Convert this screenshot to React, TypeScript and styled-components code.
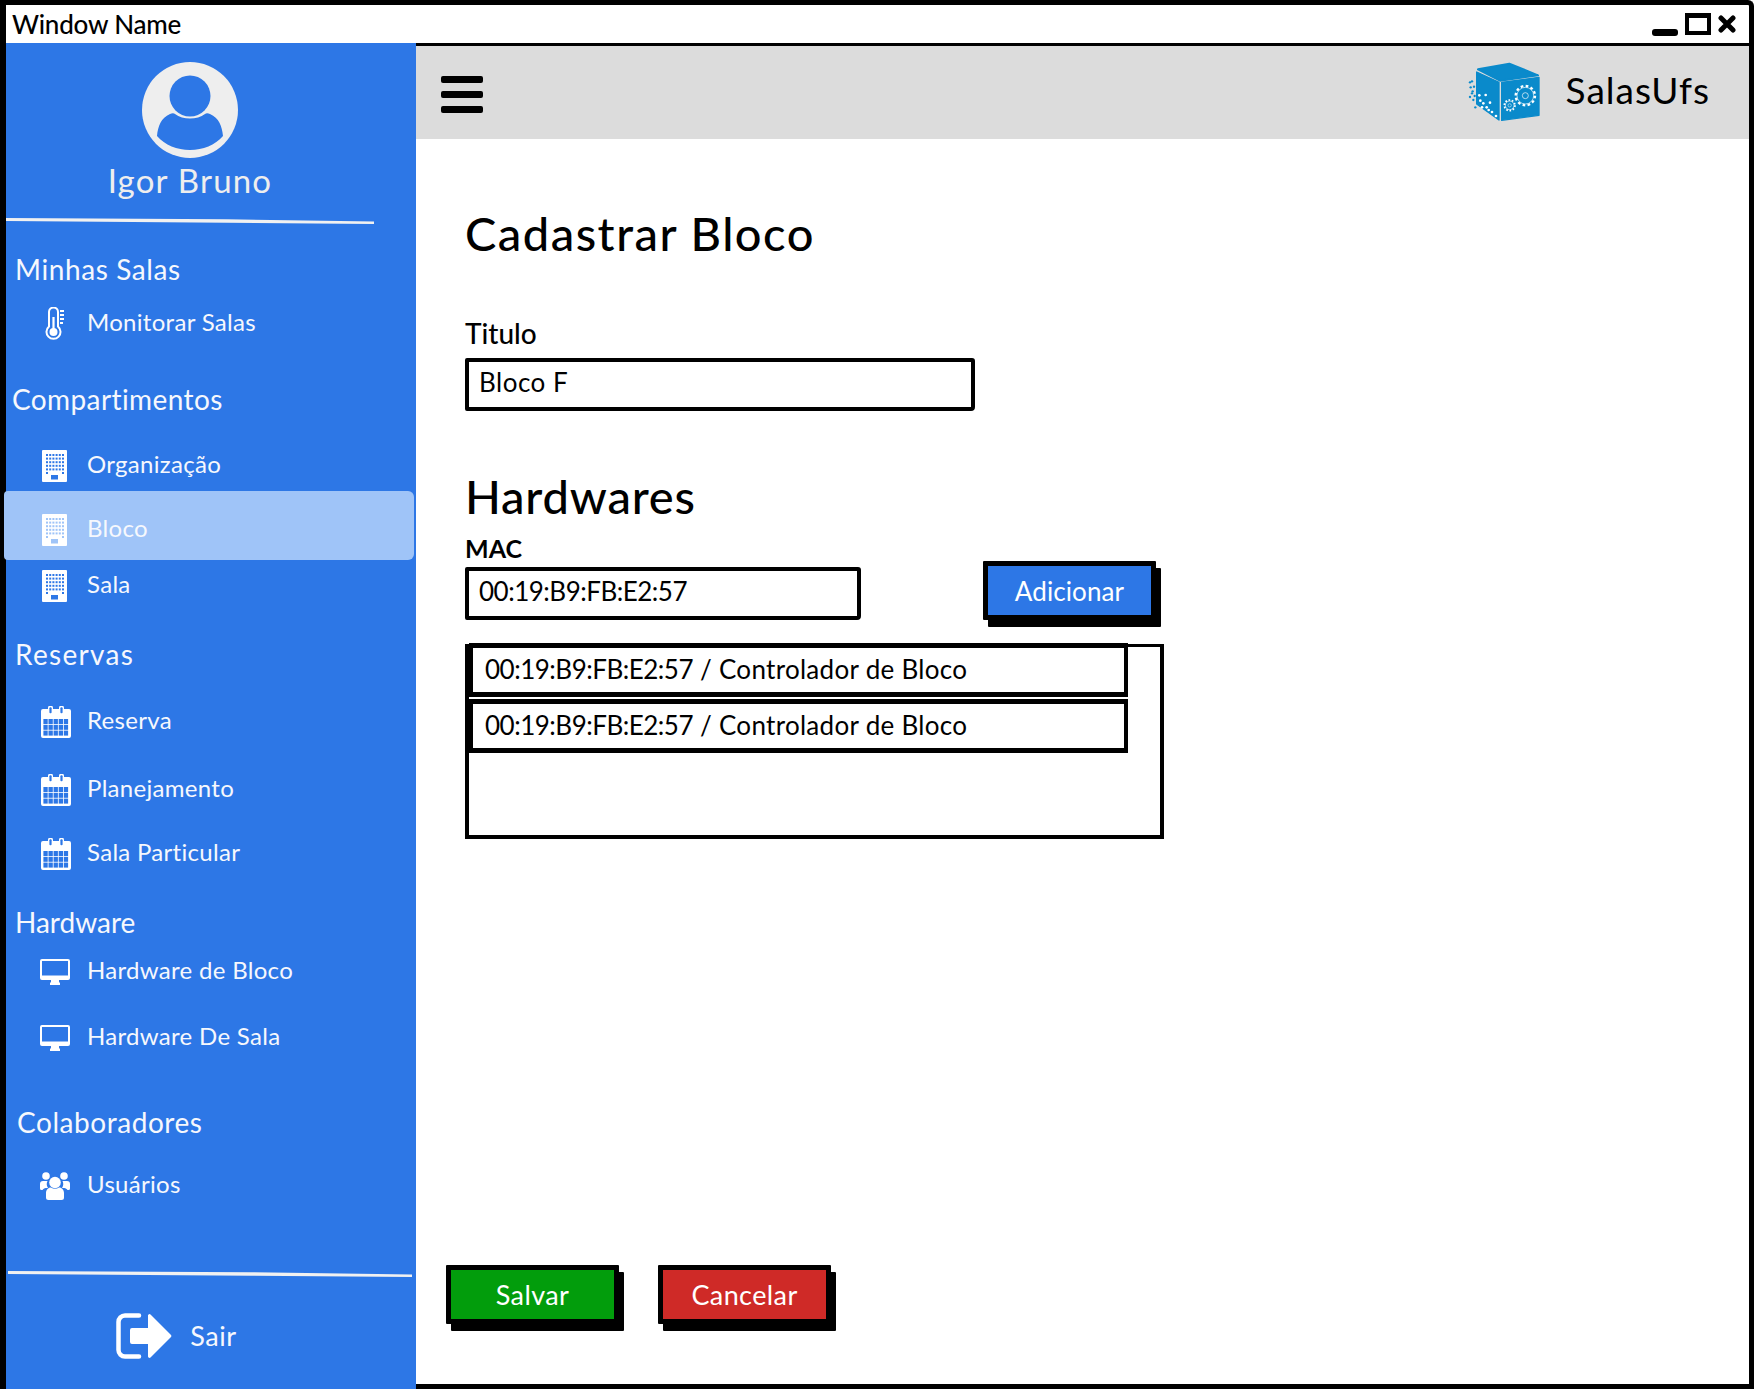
import React from "react";
import styled, { createGlobalStyle } from "styled-components";

const GlobalStyle = createGlobalStyle`
  * { box-sizing: border-box; }
  body {
    margin: 0;
    background: #fff;
    font-family: "Lato", "Open Sans", sans-serif;
  }
`;

const Window = styled.div`
  width: 1754px;
  height: 1389px;
  display: flex;
  flex-direction: column;
  background: #fff;
  border-top: 5px solid #000;
  border-left: 6px solid #000;
  border-right: 5px solid #000;
  border-top-right-radius: 6px;
`;

const TitleBar = styled.div`
  height: 38px;
  flex: none;
  display: flex;
  align-items: center;
  justify-content: space-between;
  padding: 0 13px 0 6px;
`;

const WindowName = styled.span`
  font-size: 26px;
  font-weight: 500;
  letter-spacing: -0.2px;
  color: #000;
`;

const WindowControls = styled.div`
  display: flex;
  align-items: flex-end;
  gap: 7px;
`;

const Minimize = styled.span`
  width: 26px;
  height: 7px;
  background: #000;
  border-radius: 3px;
`;

const Maximize = styled.span`
  width: 26px;
  height: 22px;
  margin-bottom: 1px;
  border: 4px solid #000;
  border-top-width: 5px;
`;

const Close = styled.svg`
  width: 18px;
  height: 18px;
  margin-bottom: 3px;
`;

const Body = styled.div`
  flex: 1;
  min-height: 0;
  display: flex;
`;

const Sidebar = styled.aside`
  width: 410px;
  flex: none;
  display: flex;
  flex-direction: column;
  background: #2d77e6;
  color: #f6f8fd;
`;

const Profile = styled.div`
  display: flex;
  flex-direction: column;
  align-items: center;
  padding-top: 19px;
  margin-left: -42px;
`;

const Avatar = styled.svg`
  width: 96px;
  height: 96px;
`;

const UserName = styled.div`
  height: 36px;
  margin-top: 4px;
  font-size: 33px;
  line-height: 36px;
  color: #eeeeee;
  letter-spacing: 1.2px;
`;

const Divider = styled.div<{ $top: number; $width: number; $left: number }>`
  height: 6px;
  width: ${(p) => p.$width}px;
  margin-top: ${(p) => p.$top}px;
  margin-left: ${(p) => p.$left}px;
  flex: none;
  background: #f1f1f1;
  clip-path: polygon(0 0, 60% 20%, 100% 60%, 100% 100%, 60% 80%, 0 50%);
`;

const SectionTitle = styled.div<{ $top: number; $left: number; $spacing: number }>`
  height: 30px;
  flex: none;
  margin-top: ${(p) => p.$top}px;
  padding-left: ${(p) => p.$left}px;
  font-size: 28px;
  line-height: 26px;
  letter-spacing: ${(p) => p.$spacing}px;
`;

const NavItem = styled.div<{ $top: number; $active?: boolean }>`
  flex: none;
  display: grid;
  grid-template-columns: 32px 1fr;
  column-gap: 16px;
  align-items: center;
  height: ${(p) => (p.$active ? "69px" : "36px")};
  margin-top: ${(p) => p.$top}px;
  padding: ${(p) => (p.$active ? "8px 0 0 33px" : "0 0 0 33px")};
  ${(p) =>
    p.$active &&
    `
    background: #9fc4f8;
    width: 410px;
    margin-left: -2px;
    padding-left: 35px;
    border-radius: 4px 6px 6px 4px;
  `}
`;

const NavLabel = styled.span`
  font-size: 24px;
  line-height: 32px;
  margin-bottom: 4px;
  letter-spacing: 0.3px;
  white-space: nowrap;
`;

const NavIcon = styled.div`
  display: flex;
  justify-content: center;
  align-items: center;
  color: #fff;
`;

const Logout = styled.div`
  display: flex;
  align-items: center;
  justify-content: center;
  gap: 18px;
  margin-top: 36px;
  margin-left: -69px;
`;

const LogoutLabel = styled.span`
  font-size: 27px;
  letter-spacing: 0.6px;
  margin-bottom: 2px;
`;

const Main = styled.main`
  flex: 1;
  min-width: 0;
  display: flex;
  flex-direction: column;
  border-top: 3px solid #000;
  border-bottom: 5px solid #000;
`;

const Header = styled.header`
  height: 93px;
  flex: none;
  display: flex;
  align-items: center;
  justify-content: space-between;
  padding: 0 39px 0 25px;
  background: #dcdcdc;
`;

const Burger = styled.div`
  width: 42px;
  display: flex;
  flex-direction: column;
  gap: 8px;
  margin-top: 3px;
  span {
    height: 7px;
    background: #000;
    border-radius: 2px;
  }
`;

const Brand = styled.div`
  display: flex;
  align-items: center;
  gap: 25px;
`;

const BrandName = styled.span`
  font-size: 37px;
  line-height: 40px;
  margin-bottom: 5px;
  color: #000;
  letter-spacing: 1px;
`;

const Content = styled.div`
  flex: 1;
  min-height: 0;
  display: flex;
  flex-direction: column;
  padding-left: 49px;
`;

const PageTitle = styled.h1<{ $top: number; $spacing: number }>`
  margin: ${(p) => p.$top}px 0 0 0;
  height: 56px;
  font-size: 47px;
  line-height: 52px;
  font-weight: 500;
  color: #000;
  letter-spacing: ${(p) => p.$spacing}px;
`;

const FieldLabel = styled.label<{ $top: number; $bold?: boolean }>`
  display: block;
  height: 32px;
  margin-top: ${(p) => p.$top}px;
  font-size: ${(p) => (p.$bold ? "25px" : "28px")};
  font-weight: ${(p) => (p.$bold ? 700 : 500)};
  line-height: 30px;
  color: #000;
`;

const TextBox = styled.div<{ $width: number; $top: number }>`
  width: ${(p) => p.$width}px;
  height: 53px;
  flex: none;
  display: flex;
  align-items: center;
  margin-top: ${(p) => p.$top}px;
  padding: 0 0 5px 10px;
  border: 4px solid #000;
  border-radius: 2px 3px 4px 2px;
  font-size: 26px;
  letter-spacing: 0.5px;
  color: #000;
`;

const MacText = styled.span`
  letter-spacing: -0.5px;
`;

const MacRow = styled.div`
  display: flex;
  align-items: flex-start;
`;

const ActionButton = styled.button<{ $color: string }>`
  width: 173px;
  height: 59px;
  padding: 0;
  background: ${(p) => p.$color};
  border: 5px solid #000;
  border-radius: 1px;
  box-shadow: 5px 7px 0 #000;
  color: #fff;
  font-family: inherit;
  font-size: 27px;
  letter-spacing: 0.4px;
`;

const AddButton = styled(ActionButton)`
  margin: -4px 0 0 122px;
  font-size: 26px;
  letter-spacing: 0.1px;
`;

const HardwareList = styled.div`
  width: 699px;
  height: 195px;
  margin-top: 24px;
  border: 4px solid #000;
  border-top-width: 3px;
  display: flex;
  flex-direction: column;
  gap: 2px;
`;

const HardwareRow = styled.div`
  width: 659px;
  height: 54px;
  flex: none;
  display: flex;
  align-items: center;
  padding: 0 0 3px 12px;
  background: #fff;
  border: 5px solid #000;
  border-width: 5px 4px;
  font-size: 26px;
  letter-spacing: 0.3px;
  color: #000;
  white-space: pre;
  &:first-child {
    margin-top: -4px;
  }
`;

const Footer = styled.div`
  margin-top: auto;
  display: flex;
  gap: 39px;
  margin-left: -19px;
  padding-bottom: 60px;
`;

type IconProps = { hole?: string };

const Thermometer = () => (
  <svg width="20" height="34" viewBox="0 0 20 34" fill="none">
    <path
      d="M4 19.5V5a4.5 4.5 0 0 1 9 0v14.5a7 7 0 1 1-9 0Z"
      stroke="#fff"
      strokeWidth="2"
    />
    <circle cx="8.5" cy="25" r="4" fill="#fff" />
    <rect x="7.4" y="10" width="2.2" height="13" fill="#fff" />
    <path d="M15 4h4M15 8h4M15 12h4M15 16h3" stroke="#fff" strokeWidth="1.8" />
  </svg>
);

const Building = ({ hole = "#2d77e6" }: IconProps) => {
  const dots: React.ReactElement[] = [];
  for (let row = 0; row < 6; row++) {
    for (let col = 0; col < 6; col++) {
      if (row === 5 && col > 0 && col < 5) continue;
      dots.push(
        <rect
          key={`${row}-${col}`}
          x={4 + col * 3.2}
          y={4 + row * 3.6}
          width="2"
          height="2"
          fill={hole}
        />
      );
    }
  }
  return (
    <svg width="25" height="32" viewBox="0 0 25 32" style={{ marginLeft: -2 }}>
      <rect width="25" height="32" rx="1" fill="#fff" />
      {dots}
      <rect x="9" y="25" width="7" height="4.5" fill={hole} />
    </svg>
  );
};

const Calendar = () => {
  const cells: React.ReactElement[] = [];
  for (let row = 0; row < 3; row++) {
    for (let col = 0; col < 5; col++) {
      cells.push(
        <rect
          key={`${row}-${col}`}
          x={2.4 + col * 5.1}
          y={13 + row * 5.8}
          width="4.3"
          height="5"
          fill="#2d77e6"
        />
      );
    }
  }
  return (
    <svg width="30" height="32" viewBox="0 0 30 32" style={{ marginLeft: 2 }}>
      <path
        d="M2 3h5v-1a2.5 2.5 0 0 1 5 0v1h6v-1a2.5 2.5 0 0 1 5 0v1h5a2 2 0 0 1 2 2v25a2 2 0 0 1-2 2H2a2 2 0 0 1-2-2V5a2 2 0 0 1 2-2Z"
        fill="#fff"
      />
      <rect x="8.4" y="1.2" width="2.2" height="6" rx="1" fill="#2d77e6" />
      <rect x="19.4" y="1.2" width="2.2" height="6" rx="1" fill="#2d77e6" />
      {cells}
    </svg>
  );
};

const Monitor = () => (
  <svg width="30" height="26" viewBox="0 0 30 26" fill="none">
    <path
      d="M2 0h26a2 2 0 0 1 2 2v17a2 2 0 0 1-2 2H19v2l1 1v2H10v-2l1-1v-2H2a2 2 0 0 1-2-2V2a2 2 0 0 1 2-2Z"
      fill="#fff"
    />
    <rect x="2" y="2" width="26" height="14.5" fill="#2d77e6" />
  </svg>
);

const People = () => (
  <svg width="30" height="28" viewBox="0 0 30 28" fill="#fff" style={{ marginLeft: -1 }}>
    <circle cx="6" cy="4" r="3.8" />
    <circle cx="24" cy="4" r="3.8" />
    <path d="M0 12a3 3 0 0 1 3-3h4.500a7 7 0 0 0 .5 7H5.800c-1.500 0-2.600 1-3.300 2H1.500A1.500 1.500 0 0 1 0 16.500Z" />
    <path d="M30 12a3 3 0 0 0-3-3h-4.500a7 7 0 0 1-.5 7h2.200c1.500 0 2.600 1 3.300 2h1A1.500 1.500 0 0 0 30 16.500Z" />
    <circle cx="15" cy="10.500" r="5.800" />
    <path d="M6 21c0-3 2-5.500 5-5.500 2.500 1.600 5.500 1.600 8 0 3 0 5 2.500 5 5.500v4.500A2.500 2.500 0 0 1 21.500 28h-13A2.500 2.500 0 0 1 6 25.500Z" />
  </svg>
);

const SignOut = () => (
  <svg width="56" height="46" viewBox="0 0 56 46" fill="none">
    <path
      d="M23 2.5H9a6.5 6.5 0 0 0-6.5 6.500v28a6.500 6.500 0 0 0 6.500 6.500h14"
      stroke="#fff"
      strokeWidth="4.5"
      strokeLinecap="round"
    />
    <path
      d="M14 17a2 2 0 0 1 2-2h16V2.500a1.500 1.500 0 0 1 2.500-1L55 22a1.500 1.500 0 0 1 0 2L34.500 44.500a1.500 1.500 0 0 1-2.500-1V31H16a2 2 0 0 1-2-2Z"
      fill="#fff"
    />
  </svg>
);

const Logo = () => {
  const specks = [
    [212, 243], [218, 240], [224, 256], [214, 258], [220, 270],
    [212, 287], [222, 296], [226, 284], [218, 276], [228, 318],
  ];
  const inner = [
    [259, 281], [240, 282], [272, 304], [252, 306], [243, 298],
    [262, 318], [278, 332], [290, 344], [248, 318], [268, 326],
  ];
  return (
    <svg width="75" height="62" viewBox="200 182 225 186">
      <path d="M236 204 330 187 416 222 302 238Z" fill="#0a8acb" stroke="#0a8acb" strokeWidth="6" strokeLinejoin="round" />
      <path d="M232 212 299 243V356L232 308Z" fill="#0a8acb" stroke="#0a8acb" strokeWidth="4" strokeLinejoin="round" />
      <path d="M307 243 419 228V342L307 357Z" fill="#0a8acb" stroke="#0a8acb" strokeWidth="4" strokeLinejoin="round" />
      {specks.map(([x, y]) => (
        <circle key={`${x}-${y}`} cx={x} cy={y} r="3.5" fill="#0a8acb" />
      ))}
      {inner.map(([x, y]) => (
        <circle key={`${x}-${y}`} cx={x} cy={y} r="4" fill="#fff" />
      ))}
      <g fill="none" stroke="#fff">
        <circle cx="378" cy="283" r="25" strokeWidth="2" />
        <circle cx="378" cy="283" r="29" strokeWidth="7" strokeDasharray="8 7.2" />
        <circle cx="378" cy="283" r="9" strokeWidth="2" />
        <circle cx="331" cy="312" r="13" strokeWidth="2" />
        <circle cx="331" cy="312" r="16" strokeWidth="5" strokeDasharray="5 5" />
        <circle cx="331" cy="312" r="5" strokeWidth="1.5" />
      </g>
    </svg>
  );
};

export default function App() {
  const macValue = "00:19:B9:FB:E2:57";
  const rows = ["Controlador de Bloco", "Controlador de Bloco"];

  return (
    <Window>
      <GlobalStyle />
      <TitleBar>
        <WindowName>Window Name</WindowName>
        <WindowControls>
          <Minimize />
          <Maximize />
          <Close viewBox="0 0 18 18">
            <path d="M3 3 15 15M15 3 3 15" stroke="#000" strokeWidth="5" strokeLinecap="round" />
          </Close>
        </WindowControls>
      </TitleBar>
      <Body>
        <Sidebar>
          <Profile>
            <Avatar viewBox="0 0 96 96">
              <circle cx="48" cy="48" r="48" fill="#eeeeee" />
              <circle cx="48" cy="34" r="20.5" fill="#2d77e6" />
              <path
                d="M15 74c1-10 4-18 13-22 2-1 4-1 5 0 8 6 22 6 30 0 1-1 3-1 5 0 9 4 12 12 13 22-8 9-20 14-33 14s-25-5-33-14Z"
                fill="#2d77e6"
              />
            </Avatar>
            <UserName>Igor Bruno</UserName>
          </Profile>
          <Divider $top={20} $width={368} $left={0} />

          <SectionTitle $top={32} $left={9} $spacing={0.6}>Minhas Salas</SectionTitle>
          <NavItem $top={20}>
            <NavIcon><Thermometer /></NavIcon>
            <NavLabel>Monitorar Salas</NavLabel>
          </NavItem>

          <SectionTitle $top={44} $left={6} $spacing={0.4}>Compartimentos</SectionTitle>
          <NavItem $top={32}>
            <NavIcon><Building /></NavIcon>
            <NavLabel>Organização</NavLabel>
          </NavItem>
          <NavItem $top={7} $active>
            <NavIcon><Building hole="#9fc4f8" /></NavIcon>
            <NavLabel>Bloco</NavLabel>
          </NavItem>
          <NavItem $top={8}>
            <NavIcon><Building /></NavIcon>
            <NavLabel>Sala</NavLabel>
          </NavItem>

          <SectionTitle $top={37} $left={9} $spacing={1.3}>Reservas</SectionTitle>
          <NavItem $top={33}>
            <NavIcon><Calendar /></NavIcon>
            <NavLabel>Reserva</NavLabel>
          </NavItem>
          <NavItem $top={32}>
            <NavIcon><Calendar /></NavIcon>
            <NavLabel>Planejamento</NavLabel>
          </NavItem>
          <NavItem $top={28}>
            <NavIcon><Calendar /></NavIcon>
            <NavLabel>Sala Particular</NavLabel>
          </NavItem>

          <SectionTitle $top={37} $left={9} $spacing={0}>Hardware</SectionTitle>
          <NavItem $top={15}>
            <NavIcon><Monitor /></NavIcon>
            <NavLabel>Hardware de Bloco</NavLabel>
          </NavItem>
          <NavItem $top={30}>
            <NavIcon><Monitor /></NavIcon>
            <NavLabel>Hardware De Sala</NavLabel>
          </NavItem>

          <SectionTitle $top={53} $left={11} $spacing={0.55}>Colaboradores</SectionTitle>
          <NavItem $top={29}>
            <NavIcon><People /></NavIcon>
            <NavLabel>Usuários</NavLabel>
          </NavItem>

          <Divider $top={67} $width={404} $left={2} />
          <Logout>
            <SignOut />
            <LogoutLabel>Sair</LogoutLabel>
          </Logout>
        </Sidebar>

        <Main>
          <Header>
            <Burger>
              <span />
              <span />
              <span />
            </Burger>
            <Brand>
              <Logo />
              <BrandName>SalasUfs</BrandName>
            </Brand>
          </Header>
          <Content>
            <PageTitle $top={68} $spacing={1.5}>Cadastrar Bloco</PageTitle>
            <FieldLabel $top={55}>Titulo</FieldLabel>
            <TextBox $width={510} $top={8}>Bloco F</TextBox>
            <PageTitle $top={59} $spacing={0.8}>Hardwares</PageTitle>
            <FieldLabel $top={7} $bold>MAC</FieldLabel>
            <MacRow>
              <TextBox $width={396} $top={2}><MacText>{macValue}</MacText></TextBox>
              <AddButton $color="#2d77e6">Adicionar</AddButton>
            </MacRow>
            <HardwareList>
              {rows.map((row, i) => (
                <HardwareRow key={i}><MacText>{macValue}</MacText>{` / ${row}`}</HardwareRow>
              ))}
            </HardwareList>
            <Footer>
              <ActionButton $color="#029d0c">Salvar</ActionButton>
              <ActionButton $color="#cf2a27">Cancelar</ActionButton>
            </Footer>
          </Content>
        </Main>
      </Body>
    </Window>
  );
}
